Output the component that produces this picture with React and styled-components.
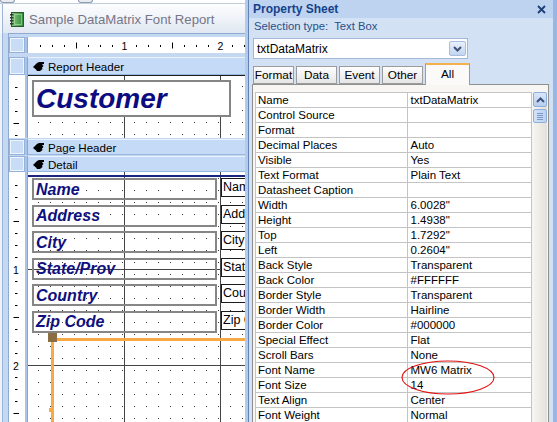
import React from "react";
import styled, { createGlobalStyle, css } from "styled-components";

const GlobalStyle = createGlobalStyle`
  html, body { margin: 0; padding: 0; background: #ffffff; }
  body { font-family: "Liberation Sans", Arial, sans-serif; color: #000; }
`;

const fields = ["Name", "Address", "City", "State/Prov", "Country", "Zip Code"];

const properties = [
  ["Name", "txtDataMatrix"],
  ["Control Source", ""],
  ["Format", ""],
  ["Decimal Places", "Auto"],
  ["Visible", "Yes"],
  ["Text Format", "Plain Text"],
  ["Datasheet Caption", ""],
  ["Width", "6.0028\""],
  ["Height", "1.4938\""],
  ["Top", "1.7292\""],
  ["Left", "0.2604\""],
  ["Back Style", "Transparent"],
  ["Back Color", "#FFFFFF"],
  ["Border Style", "Transparent"],
  ["Border Width", "Hairline"],
  ["Border Color", "#000000"],
  ["Special Effect", "Flat"],
  ["Scroll Bars", "None"],
  ["Font Name", "MW6 Matrix"],
  ["Font Size", "14"],
  ["Text Align", "Center"],
  ["Font Weight", "Normal"],
  ["Font Underline", "No"],
];

const tabs = ["Format", "Data", "Event", "Other", "All"];

const BookIcon = () => (
  <svg width="14" height="15" viewBox="0 0 14 15">
    <defs>
      <linearGradient id="bookFill" x1="0" x2="1">
        <stop offset="0" stopColor="#86c97f" />
        <stop offset="1" stopColor="#2f8a3a" />
      </linearGradient>
    </defs>
    <rect x="1.5" y="0.5" width="12" height="14" fill="url(#bookFill)" stroke="#2b5a2d" />
    <rect x="4.5" y="2.5" width="7" height="10" fill="none" stroke="#b9e6b2" strokeOpacity="0.55" />
    {[2, 5, 8, 11].map((y) => (
      <rect key={y} x="0" y={y} width="3.5" height="1.5" fill="#2d3a2d" />
    ))}
  </svg>
);

// section selector glyph: a small black hand pointing down-left
const SectionGlyph = () => (
  <svg width="11" height="9" viewBox="0 0 11 9">
    <path d="M0 5 L4 1 L6 0 H11 V2 H9 L10.5 4 L9 5.5 L9.5 7 L7 9 H4 L3 7.5 Z" fill="#000" />
  </svg>
);

const HRuler = () => {
  const marks = [];
  for (let k = 1; k < 19; k++) {
    const x = k * 12 + 0.5;
    if (k % 8 === 0) {
      marks.push(
        <text key={k} x={x} y="12.5" fontSize="10.5" textAnchor="middle" fontFamily="Liberation Sans, Arial, sans-serif">
          {k / 8}
        </text>
      );
    } else if (k % 4 === 0) {
      marks.push(<line key={k} x1={x} x2={x} y1="5.5" y2="11.5" stroke="#000" />);
    } else {
      marks.push(<line key={k} x1={x} x2={x} y1="8" y2="10" stroke="#000" />);
    }
  }
  return (
    <svg width="217" height="16">
      {marks}
    </svg>
  );
};

const VRuler = ({ height, origin }) => {
  const marks = [];
  for (let k = 1; origin + k * 12 < height; k++) {
    const y = origin + k * 12 + 0.5;
    if (k % 8 === 0) {
      marks.push(
        <text key={k} x="7" y={y + 4} fontSize="10.5" textAnchor="middle" fontFamily="Liberation Sans, Arial, sans-serif">
          {k / 8}
        </text>
      );
    } else if (k % 4 === 0) {
      marks.push(<line key={k} x1="4.5" x2="10" y1={y} y2={y} stroke="#000" />);
    } else {
      marks.push(<line key={k} x1="6" x2="8.5" y1={y} y2={y} stroke="#000" />);
    }
  }
  return (
    <svg width="16" height={height}>
      {marks}
    </svg>
  );
};

const Chevron = ({ up }) => (
  <svg width="9" height="6" viewBox="0 0 9 6">
    <polyline
      points={up ? "1,5 4.5,1.5 8,5" : "1,1 4.5,4.5 8,1"}
      fill="none"
      stroke="#3d5378"
      strokeWidth="2"
    />
  </svg>
);

const CloseGlyph = () => (
  <svg width="9" height="9" viewBox="0 0 9 9">
    <path d="M1 1 L8 8 M8 1 L1 8" stroke="#1d3f78" strokeWidth="1.8" />
  </svg>
);

export default function App() {
  return (
    <Screen>
      <GlobalStyle />
      <ReportWindow>
        <TopStrip>
          <StripTab />
          <StripTab />
        </TopStrip>
        <TitleBar>
          <BookIcon />
          <span>Sample DataMatrix Font Report</span>
        </TitleBar>
        <Body>
          <FrameEdge />
          <Designer>
            <Band $h={4} $edge />
            <Strip $h={16}>
              <Gutter $box />
              <Divider />
              <RulerTrack>
                <HRuler />
              </RulerTrack>
            </Strip>
            <Band $h={4} />
            <Strip $h={18}>
              <Gutter $box />
              <Divider />
              <SectionBar>
                <SectionGlyph />
                Report Header
              </SectionBar>
            </Strip>
            <Strip $h={63}>
              <Gutter>
                <VRuler height={63} origin={0} />
              </Gutter>
              <Divider />
              <DesignArea $rule="#1e1e1e" $dotY={10}>
                <TitleCaption>Customer</TitleCaption>
              </DesignArea>
            </Strip>
            <Band $h={1} />
            <Strip $h={16}>
              <Gutter $box />
              <Divider />
              <SectionBar>
                <SectionGlyph />
                Page Header
              </SectionBar>
            </Strip>
            <Band $h={1} />
            <Strip $h={16}>
              <Gutter $box />
              <Divider />
              <SectionBar>
                <SectionGlyph />
                Detail
              </SectionBar>
            </Strip>
            <Strip $grow>
              <Gutter>
                <VRuler height={250} origin={1} />
              </Gutter>
              <Divider />
              <DesignArea $dotY={6} $inchLines>
                <TopRule />
                <FieldList>
                  {fields.map((f) => (
                    <FieldRow key={f}>
                      <CaptionBox>{f}</CaptionBox>
                      <BoundBox>{f}</BoundBox>
                    </FieldRow>
                  ))}
                </FieldList>
                <SelEdge $horizontal />
                <SelEdge />
                <SelHandle />
                <SelTick />
              </DesignArea>
            </Strip>
          </Designer>
        </Body>
      </ReportWindow>

      <SheetPanel>
        <SheetHeader>
          <span>Property Sheet</span>
          <CloseGlyph />
        </SheetHeader>
        <SelectionLine>Selection type:&nbsp; Text Box</SelectionLine>
        <Combo>
          <span>txtDataMatrix</span>
          <DropButton>
            <Chevron />
          </DropButton>
        </Combo>
        <TabStrip>
          {tabs.map((t) => (
            <SheetTab key={t} $active={t === "All"}>
              {t}
            </SheetTab>
          ))}
        </TabStrip>
        <TabPane>
          <PropGrid>
            {properties.map(([label, value]) => (
              <React.Fragment key={label}>
                <Cell>{label}</Cell>
                <Cell $value>{value}</Cell>
              </React.Fragment>
            ))}
          </PropGrid>
          <ScrollBar>
            <ScrollButton>
              <Chevron up />
            </ScrollButton>
            <ScrollThumb>
              <Grip />
              <Grip />
              <Grip />
              <Grip />
            </ScrollThumb>
          </ScrollBar>
        </TabPane>
        <Annotation width="94" height="35" viewBox="0 0 94 35">
          <ellipse cx="47" cy="17.5" rx="46" ry="16.5" fill="none" stroke="#e01010" strokeWidth="1.1" />
        </Annotation>
      </SheetPanel>
    </Screen>
  );
}

const Screen = styled.div`
  display: flex;
  width: 557px;
  height: 422px;
  overflow: hidden;
`;

/* report design window */

const ReportWindow = styled.section`
  width: 248px;
  flex: none;
  display: flex;
  flex-direction: column;
  box-sizing: border-box;
  border-right: 3px solid #b3cbeb;
  background: #c5d8f1;
`;

const TopStrip = styled.div`
  height: 4px;
  flex: none;
  display: flex;
  gap: 63px;
  box-sizing: border-box;
  background: #ffffff;
  border-bottom: 1px solid #c3cedd;
`;

const StripTab = styled.div`
  width: 15px;
  height: 3px;
  box-sizing: border-box;
  border: 1px solid #8d9bb1;
  border-top: none;
  border-radius: 0 0 3px 3px;
  background: #e8ecf2;
`;

const TitleBar = styled.div`
  height: 29px;
  flex: none;
  display: flex;
  align-items: center;
  gap: 5px;
  padding: 2px 0 0 10px;
  box-sizing: border-box;
  background: linear-gradient(to right, #f5f8fc 0 2px, #9fb5d6 2px 3px, transparent 3px),
    linear-gradient(#fdfdfe, #e1e8f2);
  font-size: 13.2px;
  color: #767688;
  white-space: nowrap;
`;

const Body = styled.div`
  flex: 1;
  display: flex;
  min-height: 0;
`;

const FrameEdge = styled.div`
  width: 9px;
  flex: none;
  background: linear-gradient(
    to right,
    #edf2f9 0 2px,
    #9bb4d8 2px 3px,
    #c5d8f1 3px 8px,
    #8eaad3 8px 9px
  );
`;

const Designer = styled.div`
  flex: 1;
  min-width: 0;
  display: flex;
  flex-direction: column;
`;

const Band = styled.div`
  height: ${(p) => p.$h}px;
  flex: none;
  box-sizing: border-box;
  background: #c5d8f1;
  ${(p) => p.$edge && css`border-top: 1px solid #8eaad3;`}
`;

const Strip = styled.div`
  display: flex;
  min-height: 0;
  flex: ${(p) => (p.$grow ? "1" : "none")};
  height: ${(p) => (p.$h ? `${p.$h}px` : "auto")};
  overflow: hidden;
`;

const Gutter = styled.div`
  width: 16px;
  flex: none;
  box-sizing: border-box;
  background: #ffffff;
  ${(p) =>
    p.$box &&
    css`
      background: #c8dcf5;
      border: 1px solid #94b2db;
      box-shadow: inset 0 0 0 1px #eef5fd;
    `}
`;

const Divider = styled.div`
  width: 3px;
  flex: none;
  box-sizing: border-box;
  background: #aac4e9;
  border-right: 1px solid #86a6d4;
`;

const RulerTrack = styled.div`
  flex: 1;
  background: #ffffff;
  overflow: hidden;
`;

const SectionBar = styled.div`
  flex: 1;
  display: flex;
  align-items: center;
  gap: 4px;
  padding-left: 5px;
  box-sizing: border-box;
  background: #c4daf7;
  border-top: 1px solid #e9f2fd;
  border-bottom: 1px solid #96b5df;
  font-size: 11.6px;
  white-space: nowrap;
`;

const DesignArea = styled.div`
  flex: 1;
  position: relative;
  overflow: hidden;
  display: flex;
  flex-direction: column;
  box-sizing: border-box;
  ${(p) => p.$rule && css`border-top: 1px solid ${p.$rule};`}
  background-color: #3a3a3a;
  background-image: linear-gradient(
      to right,
      #454545 0 1px,
      transparent 1px 96px,
      #454545 96px 97px,
      transparent 97px
    ),
    ${(p) =>
      p.$inchLines
        ? "linear-gradient(to bottom, #454545 0 1px, transparent 1px 96px, #454545 96px 97px, transparent 97px)"
        : "linear-gradient(transparent, transparent)"},
    linear-gradient(to right, transparent 1px, #ffffff 1px),
    linear-gradient(to bottom, transparent 1px, #ffffff 1px);
  background-size: 200px 100%, 100% 200px, 12px 12px, 12px 12px;
  background-repeat: no-repeat, no-repeat, repeat, repeat;
  background-position: 96px 0, 0 97px, 10px 0, 0 ${(p) => p.$dotY}px;
`;

const TitleCaption = styled.div`
  margin: 4px 0 0 4px;
  width: 199px;
  height: 37px;
  flex: none;
  box-sizing: border-box;
  border: 2px solid #858585;
  background: #ffffff;
  display: flex;
  align-items: center;
  padding-left: 2px;
  font: italic bold 28px "Liberation Sans", Arial, sans-serif;
  color: #0c0c80;
`;

const TopRule = styled.div`
  height: 2px;
  flex: none;
  margin: 3px 0 1px;
  background: #1b2580;
`;

const FieldList = styled.div`
  display: flex;
  flex-direction: column;
  gap: 4.6px;
  padding-left: 4px;
`;

const FieldRow = styled.div`
  display: flex;
  gap: 4px;
  height: 22px;
  flex: none;
`;

const CaptionBox = styled.div`
  width: 185px;
  flex: none;
  box-sizing: border-box;
  border: 2px solid #868686;
  display: flex;
  align-items: center;
  padding: 1px 0 0 2px;
  font: italic bold 16px "Liberation Sans", Arial, sans-serif;
  color: #10107e;
  white-space: nowrap;
`;

const BoundBox = styled.div`
  width: 60px;
  height: 19px;
  flex: none;
  box-sizing: border-box;
  border: 1px solid #1b1b1b;
  background: #ffffff;
  padding: 1px 0 0 1px;
  font-size: 12.5px;
  white-space: nowrap;
  overflow: hidden;
`;

const SelEdge = styled.div`
  position: absolute;
  background: #f8a944;
  ${(p) =>
    p.$horizontal
      ? css`
          left: 29px;
          right: 0;
          top: 166px;
          height: 3px;
        `
      : css`
          left: 23px;
          top: 170px;
          bottom: 0;
          width: 3px;
        `}
`;

const SelHandle = styled.div`
  position: absolute;
  left: 20px;
  top: 161px;
  width: 9px;
  height: 9px;
  background: #8c6e45;
`;

const SelTick = styled.div`
  position: absolute;
  left: 21px;
  top: 236px;
  width: 3px;
  height: 4px;
  background: #f8a944;
`;

/* property sheet */

const SheetPanel = styled.aside`
  flex: 1;
  min-width: 0;
  position: relative;
  display: flex;
  flex-direction: column;
  box-sizing: border-box;
  border-left: 1px solid #6281b5;
  border-right: 4px solid #98b7e4;
  background: #d2e1f4;
`;

const SheetHeader = styled.header`
  height: 18px;
  flex: none;
  display: flex;
  align-items: center;
  justify-content: space-between;
  padding: 0 7px 0 4px;
  box-sizing: border-box;
  background: #bed3ef;
  font-weight: bold;
  font-size: 12px;
  color: #15428b;
`;

const SelectionLine = styled.div`
  height: 17px;
  flex: none;
  line-height: 17px;
  padding-left: 5px;
  font-size: 11.3px;
  color: #2a4f87;
`;

const Combo = styled.div`
  margin: 3px 0 0 4px;
  width: 215px;
  height: 21px;
  flex: none;
  display: flex;
  align-items: center;
  justify-content: space-between;
  box-sizing: border-box;
  border: 1px solid #a3b7d6;
  background: #ffffff;
  padding: 0 1px 0 3px;
  font-size: 12px;
`;

const DropButton = styled.div`
  width: 17px;
  height: 15px;
  display: flex;
  align-items: center;
  justify-content: center;
  box-sizing: border-box;
  border: 1px solid #a6bde0;
  border-radius: 2px;
  background: linear-gradient(#e8f0fc, #c2d5f1);
`;

const TabStrip = styled.div`
  height: 22px;
  flex: none;
  margin-top: 3px;
  display: flex;
  align-items: flex-end;
  gap: 2px;
  padding-left: 4px;
  position: relative;
  z-index: 1;
`;

const SheetTab = styled.div`
  width: 41px;
  height: 18px;
  box-sizing: border-box;
  border: 1px solid #9c9c9c;
  background: linear-gradient(#fefefe, #e6e6e6);
  display: flex;
  align-items: center;
  justify-content: center;
  font-size: 11.8px;
  ${(p) =>
    p.$active &&
    css`
      width: 45px;
      height: 22px;
      margin-bottom: -1px;
      border-top: 2px solid #f3b04d;
      border-bottom: none;
      background: #fbfaf8;
      padding-bottom: 2px;
    `}
`;

const TabPane = styled.div`
  flex: 1;
  min-height: 0;
  margin: 0 4px 0 3px;
  box-sizing: border-box;
  border: 1px solid #8f8f8f;
  border-bottom: none;
  background: #f7f6f2;
  display: flex;
  align-items: flex-start;
  gap: 1px;
  padding: 7px 0 0 2px;
  overflow: hidden;
`;

const PropGrid = styled.div`
  width: 277px;
  flex: none;
  box-sizing: border-box;
  border-top: 1px solid #c4c4c4;
  border-left: 1px solid #c4c4c4;
  display: grid;
  grid-template-columns: 152px 124px;
  grid-auto-rows: 15px;
`;

const Cell = styled.div`
  box-sizing: border-box;
  border-right: 1px solid #c4c4c4;
  border-bottom: 1px solid #c4c4c4;
  background: #ffffff;
  padding-left: ${(p) => (p.$value ? "2.5px" : "2px")};
  font-size: 11.5px;
  line-height: 14px;
  white-space: nowrap;
  overflow: hidden;
`;

const ScrollBar = styled.div`
  width: 14px;
  align-self: stretch;
  flex: none;
  display: flex;
  flex-direction: column;
  gap: 2px;
  background: linear-gradient(to right, #f6f5f0, #e3e1d9);
`;

const ScrollButton = styled.div`
  height: 15px;
  flex: none;
  display: flex;
  align-items: center;
  justify-content: center;
  box-sizing: border-box;
  border: 1px solid #8eafdd;
  border-radius: 2px;
  background: linear-gradient(#dae7fa, #b7cdef);
`;

const ScrollThumb = styled.div`
  height: 14px;
  flex: none;
  display: flex;
  flex-direction: column;
  align-items: center;
  justify-content: center;
  gap: 1px;
  box-sizing: border-box;
  border: 1px solid #8eafdd;
  border-radius: 2px;
  background: linear-gradient(to right, #d3e2f8, #bcd1f0);
`;

const Grip = styled.div`
  width: 6px;
  height: 1px;
  background: #7c98c4;
`;

const Annotation = styled.svg`
  position: absolute;
  left: 152px;
  top: 360px;
  pointer-events: none;
`;
